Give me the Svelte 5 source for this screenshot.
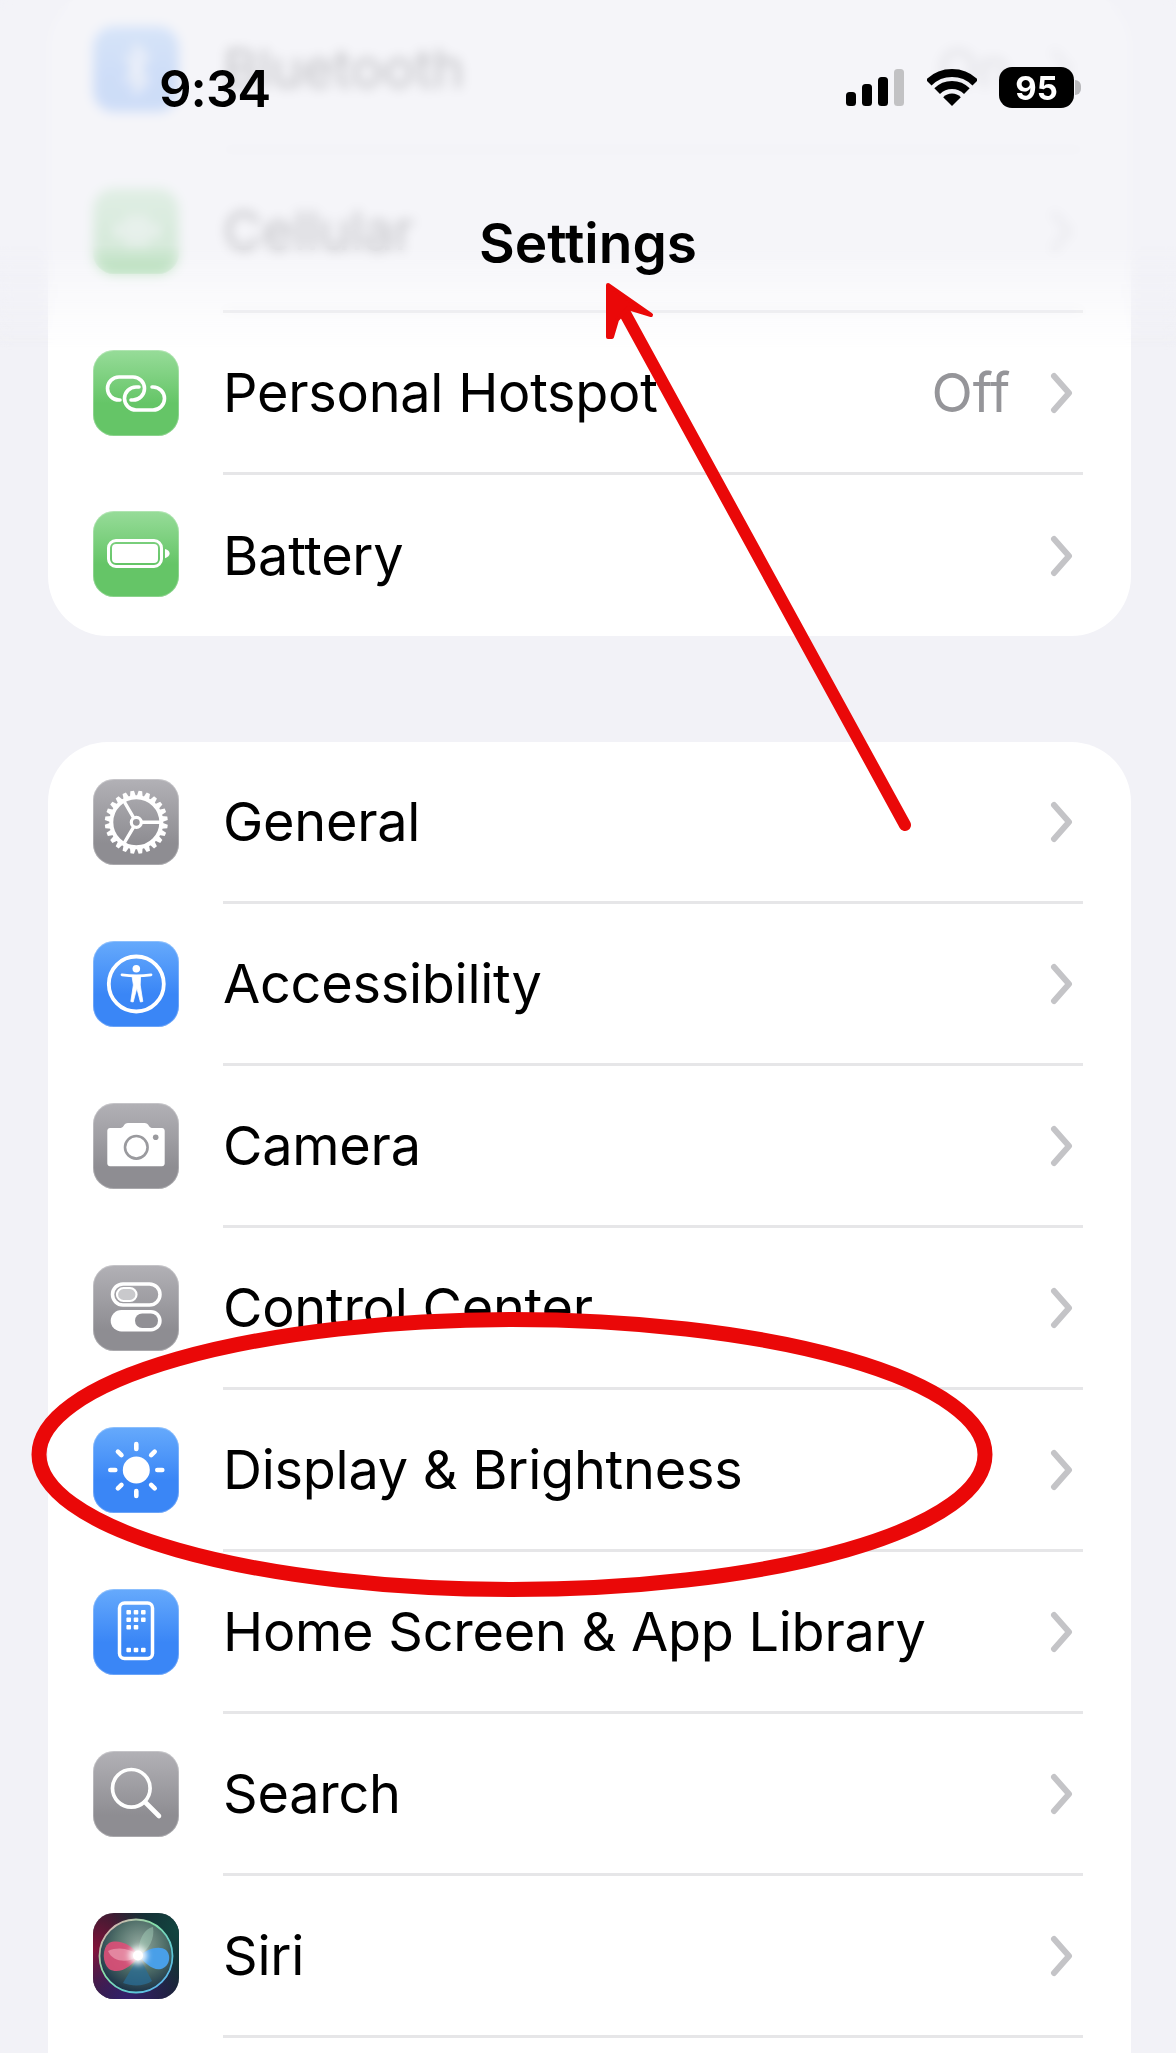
<script>
	const firstGroup = [
		{ label: 'Bluetooth', icon: 'bluetooth', tone: 'blue', value: 'On' },
		{ label: 'Cellular', icon: 'cellular', tone: 'green' },
		{ label: 'Personal Hotspot', icon: 'link', tone: 'green', value: 'Off' },
		{ label: 'Battery', icon: 'battery', tone: 'green', last: true }
	];

	const secondGroup = [
		{ label: 'General', icon: 'gear', tone: 'gray' },
		{ label: 'Accessibility', icon: 'access', tone: 'blue' },
		{ label: 'Camera', icon: 'camera', tone: 'gray' },
		{ label: 'Control Center', icon: 'control', tone: 'gray' },
		{ label: 'Display & Brightness', icon: 'sun', tone: 'blue' },
		{ label: 'Home Screen & App Library', icon: 'home', tone: 'blue' },
		{ label: 'Search', icon: 'search', tone: 'gray' },
		{ label: 'Siri', icon: 'siri', tone: 'siri' }
	];

	const teeth = Array.from({ length: 24 }, (_, i) => i * 15);
	const rays = Array.from({ length: 8 }, (_, i) => i * 45);
</script>

{#snippet glyph(name)}
	<svg viewBox="0 0 86 86" width="86" height="86" aria-hidden="true">
		{#if name === 'bluetooth'}
			<path d="M32 30l22 24-11 11V21l11 11-22 24" fill="none" stroke="#fff" stroke-width="4" />
		{:else if name === 'cellular'}
			<path d="M26 36v14M38 28v30M50 28v30M62 36v14" fill="none" stroke="#fff" stroke-width="6" />
		{:else if name === 'link'}
			<g fill="none" stroke="#fff" stroke-width="3.600" stroke-linecap="round">
				<path d="M27 50h-1a11.500 11.500 0 0 1 0-23h14a11.500 11.500 0 0 1 0 23H38" />
				<path d="M59 37h1a11.500 11.500 0 0 1 0 23H43a11.500 11.500 0 0 1 0-23h3" />
			</g>
		{:else if name === 'battery'}
			<rect x="15.500" y="29.500" width="53" height="26" rx="7.500" fill="none" stroke="#fff" stroke-width="3" />
			<rect x="19" y="33" width="46" height="19" rx="4" fill="#fff" />
			<path d="M72 38c3 .8 4.600 2.500 4.600 4.600S75 46.400 72 47.200z" fill="#fff" />
		{:else if name === 'gear'}
			{#each teeth as deg}
				<path d="M40.300 17.500L41.500 11.800h3.600l1.200 5.700z" fill="#fff" transform="rotate({deg + 7.5} 43.300 43.300)" />
			{/each}
			<circle cx="43.300" cy="43.300" r="25" fill="none" stroke="#fff" stroke-width="4" />
			<path d="M49 43.300h20M40.400 38.300L30 20.500M40.400 48.300L30 66" stroke="#fff" stroke-width="3.400" />
			<circle cx="43.300" cy="43.300" r="5" fill="none" stroke="#fff" stroke-width="3.200" />
		{:else if name === 'access'}
			<circle cx="43.300" cy="43" r="27.500" fill="none" stroke="#fff" stroke-width="3.800" />
			<circle cx="43.300" cy="27.700" r="3.800" fill="#fff" />
			<path d="M29 33.800c10 1.400 19 1.400 29 0" fill="none" stroke="#fff" stroke-width="2.800" stroke-linecap="round" />
			<path d="M39 35h8.600l-.4 9 2.600 16.500-2.400.5-3.600-14-3.600 14-2.400-.5 2.600-16.500z" fill="#fff" stroke="#fff" stroke-width=".8" stroke-linejoin="round" />
		{:else if name === 'camera'}
			<path d="M17 25h9.500c2 0 3-.6 4-2 1-1.800 2.500-3 4.500-3h16.500c2 0 3.500 1.200 4.500 3 1 1.400 2 2 4 2H69c1.500 0 2.700 1.200 2.700 2.700V60.600c0 1.500-1.200 2.700-2.700 2.700H17c-1.500 0-2.700-1.200-2.700-2.700V27.700c0-1.500 1.200-2.700 2.700-2.700z" fill="#fff" />
			<circle cx="43.300" cy="44.300" r="11.300" fill="#fff" stroke="#9a9a9e" stroke-width="2.600" />
			<circle cx="62.700" cy="34.300" r="2.800" fill="#9a9a9e" />
		{:else if name === 'control'}
			<rect x="19.500" y="19" width="47.500" height="21" rx="10.500" fill="none" stroke="#fff" stroke-width="3.500" />
			<rect x="24" y="23" width="19.500" height="13" rx="6.500" fill="#c9c9cc" stroke="#fff" stroke-width="2.200" />
			<rect x="17.700" y="45" width="51" height="21.500" rx="10.700" fill="#fff" />
			<rect x="42" y="48.500" width="23" height="14.500" rx="7.200" fill="#919095" />
		{:else if name === 'sun'}
			<circle cx="43.300" cy="43" r="13.500" fill="#fff" />
			{#each rays as deg}
				<line x1="43.300" y1="22" x2="43.300" y2="17" stroke="#fff" stroke-width="4.600" stroke-linecap="round" transform="rotate({deg} 43.300 43)" />
			{/each}
		{:else if name === 'home'}
			<rect x="26.500" y="14" width="33" height="55.500" rx="5" fill="none" stroke="#fff" stroke-width="3.500" />
			{#each [[33.4, 21], [40.7, 21], [48, 21], [33.4, 28.4], [40.7, 28.4], [48, 28.4], [33.4, 36], [40.7, 36], [33.4, 58.7], [40.7, 58.7], [48, 58.7]] as [x, y]}
				<rect {x} {y} width="4.600" height="4.600" rx="1" fill="#fff" />
			{/each}
		{:else if name === 'search'}
			<circle cx="38.300" cy="37.300" r="18.800" fill="none" stroke="#fff" stroke-width="3.700" />
			<path d="M52 51l14 14" stroke="#fff" stroke-width="4.600" stroke-linecap="round" />
		{:else if name === 'siri'}
			<defs>
				<radialGradient id="siri-left" cx="0" cy=".45" r=".75">
					<stop offset="0" stop-color="#86123a" />
					<stop offset="1" stop-color="#86123a" stop-opacity="0" />
				</radialGradient>
				<radialGradient id="siri-right" cx="1" cy=".2" r=".8">
					<stop offset="0" stop-color="#124640" />
					<stop offset="1" stop-color="#124640" stop-opacity="0" />
				</radialGradient>
				<radialGradient id="siri-bottom" cx=".4" cy="1" r=".7">
					<stop offset="0" stop-color="#35206e" />
					<stop offset="1" stop-color="#35206e" stop-opacity="0" />
				</radialGradient>
				<radialGradient id="siri-orb" cx=".55" cy=".35" r=".65">
					<stop offset="0" stop-color="#93a99f" />
					<stop offset=".55" stop-color="#4f6e68" />
					<stop offset="1" stop-color="#1c3448" />
				</radialGradient>
				<linearGradient id="siri-ring" x1="0" y1="0" x2="1" y2="1">
					<stop offset="0" stop-color="#f3a3b3" />
					<stop offset=".4" stop-color="#86e0a8" />
					<stop offset=".75" stop-color="#5cc6d8" />
					<stop offset="1" stop-color="#62a6ff" />
				</linearGradient>
				<filter id="siri-soft" x="-30%" y="-30%" width="160%" height="160%">
					<feGaussianBlur stdDeviation=".7" />
				</filter>
				<filter id="siri-glow" x="-80%" y="-80%" width="260%" height="260%">
					<feGaussianBlur stdDeviation="3" />
				</filter>
			</defs>
			<rect width="86" height="86" fill="#18202e" />
			<rect width="86" height="86" fill="url(#siri-left)" />
			<rect width="86" height="86" fill="url(#siri-right)" />
			<rect width="86" height="86" fill="url(#siri-bottom)" />
			<circle cx="43" cy="43" r="36" fill="url(#siri-orb)" />
			<path d="M46 43C44 30 50 16 60 14 62 26 56 36 46 43z" fill="#a9d2bd" opacity=".45" />
			<path d="M46 43L30 70c10 4 22 3 29-2z" fill="#2c6d94" opacity=".75" filter="url(#siri-soft)" />
			<path d="M46 43C38 30 24 26 16 30 9 35 9 50 16 56 26 62 38 54 46 43z" fill="#dc4f78" opacity=".92" filter="url(#siri-soft)" />
			<path d="M46 43C38 36 26 33 15 38 20 50 36 50 46 43z" fill="#f3b2c2" opacity=".55" />
			<path d="M46 43C54 36 66 32 73 37 79 43 76 54 68 56 60 58 52 50 46 43z" fill="#4a9fe8" filter="url(#siri-soft)" />
			<circle cx="43" cy="43" r="36.500" fill="none" stroke="url(#siri-ring)" stroke-width="1.800" />
			<circle cx="45" cy="42.500" r="9" fill="#fff" filter="url(#siri-glow)" />
			<circle cx="45" cy="42.500" r="5" fill="#fff" />
		{/if}
	</svg>
{/snippet}

{#snippet settingsRow(row)}
	<div class="row" class:last={row.last}>
		<div class="icon {row.tone}">{@render glyph(row.icon)}</div>
		<div class="row-body">
			<span class="label">{row.label}</span>
			{#if row.value}<span class="value">{row.value}</span>{/if}
			<svg class="chevron" viewBox="0 0 24 42" width="24" height="42" aria-hidden="true">
				<path d="M4 4l15 17L4 38" fill="none" stroke="#c4c4c7" stroke-width="6" stroke-linecap="round" stroke-linejoin="round" />
			</svg>
		</div>
	</div>
{/snippet}

<div class="page">
	<div class="list">
		<section class="card first">
			{#each firstGroup as row}
				{@render settingsRow(row)}
			{/each}
		</section>
		<section class="card">
			{#each secondGroup as row}
				{@render settingsRow(row)}
			{/each}
		</section>
	</div>

	<div class="nav-blur"></div>

	<header class="nav">
		<div class="status">
			<span class="time">9:34</span>
			<div class="status-icons">
				<svg viewBox="0 0 58 37" width="58" height="37" aria-hidden="true">
					<rect x="0" y="23" width="10" height="14" rx="3.500" />
					<rect x="16" y="15" width="10" height="22" rx="3.500" />
					<rect x="32" y="8" width="10" height="29" rx="3.500" />
					<rect x="48" y="0" width="10" height="37" rx="3.500" fill="#c2c2c4" />
				</svg>
				<svg class="wifi" viewBox="0 0 50 37" width="50" height="37" aria-hidden="true">
					<path d="M1.700 13.700A33 33 0 0 1 48.300 13.700M10.150 22.150A21 21 0 0 1 39.850 22.150" fill="none" stroke="#000" stroke-width="8" />
					<path d="M25 37L16.200 28.200A12.500 12.500 0 0 1 33.800 28.200Z" />
				</svg>
				<div class="battery"><span>95</span></div>
			</div>
		</div>
		<h1 class="title">Settings</h1>
	</header>

	<svg class="markup" viewBox="0 0 1176 2053" width="1176" height="2053" aria-hidden="true">
		<ellipse cx="512" cy="1454.500" rx="473" ry="135" fill="none" stroke="#ea0808" stroke-width="15" />
		<path d="M905 825L621 306" fill="none" stroke="#ea0808" stroke-width="12" stroke-linecap="round" />
		<path d="M608 285L651 315 628 308 617 320 612 337 608 337z" fill="#ea0808" stroke="#ea0808" stroke-width="4" stroke-linejoin="round" />
	</svg>
</div>

<style>
	:global(body) {
		margin: 0;
		background: #f2f2f7;
	}

	.page {
		position: relative;
		width: 1176px;
		height: 2053px;
		overflow: hidden;
		background: #f2f2f7;
		font-family: Inter, "Liberation Sans", sans-serif;
		color: #000;
	}

	/* list is scrolled a little, Bluetooth row sits above the top edge */
	.list {
		display: flex;
		flex-direction: column;
		gap: 106px;
		margin-top: -11px;
		padding: 0 45px 0 48px;
	}

	.card {
		background: #fff;
		border-radius: 60px;
		height: 1400px;
		overflow: hidden;
	}

	.card.first {
		height: 647px;
	}

	.row {
		display: flex;
		align-items: center;
		height: 162px;
		padding-left: 45px;
	}

	.row.last {
		height: 161px;
	}

	.icon {
		flex: none;
		width: 86px;
		height: 86px;
		margin-bottom: 3px;
		border-radius: 21px;
		overflow: hidden;
		box-shadow: inset 0 0 0 1px rgba(255, 255, 255, 0.25);
	}

	.icon svg {
		display: block;
	}

	.icon.green {
		background: linear-gradient(#97dc99, #65c567 62%);
	}

	.icon.blue {
		background: linear-gradient(#66aafc, #3a86f6 62%);
	}

	.icon.gray {
		background: linear-gradient(#b2b1b6, #8e8d92 75%);
	}

	.row-body {
		flex: 1;
		display: flex;
		align-items: center;
		height: 100%;
		box-sizing: border-box;
		margin-left: 44px;
		margin-right: 48px;
		padding-right: 9px;
		border-bottom: 3px solid #e6e6e8;
	}

	.row.last .row-body {
		border-bottom: 0;
	}

	.label {
		flex: 1;
		font-size: 54px;
		letter-spacing: -0.25px;
		white-space: nowrap;
	}

	.value {
		margin-right: 40px;
		font-size: 54px;
		letter-spacing: -0.25px;
		color: #959599;
	}

	.nav-blur {
		position: absolute;
		top: 0;
		left: 0;
		right: 0;
		height: 350px;
		background: rgba(242, 242, 247, 0.8);
		backdrop-filter: blur(6px);
		mask-image: linear-gradient(#000 70%, transparent);
	}

	.nav {
		position: absolute;
		top: 0;
		left: 0;
		right: 0;
	}

	.status {
		display: flex;
		align-items: center;
		justify-content: space-between;
		height: 176px;
		box-sizing: border-box;
		padding: 0 102px 0 159px;
	}

	.time {
		font-size: 51px;
		font-weight: 600;
		letter-spacing: -1px;
	}

	.status-icons {
		display: flex;
		align-items: flex-end;
		gap: 23px;
		margin-top: -3px;
	}

	.wifi {
		margin-right: -1px;
	}

	.battery {
		position: relative;
		display: flex;
		align-items: center;
		justify-content: center;
		width: 75px;
		height: 41px;
		margin-bottom: -2px;
		border-radius: 13px;
		background: #000;
		color: #fff;
		font-size: 33px;
		font-weight: 700;
	}

	.battery::after {
		content: "";
		position: absolute;
		top: 13px;
		right: -7px;
		width: 6px;
		height: 15px;
		border-radius: 0 8px 8px 0;
		background: #b9b9bc;
	}

	.title {
		margin: 37px 0 0;
		font-size: 55px;
		font-weight: 600;
		line-height: 60px;
		text-align: center;
	}

	.markup {
		position: absolute;
		top: 0;
		left: 0;
		pointer-events: none;
	}
</style>
